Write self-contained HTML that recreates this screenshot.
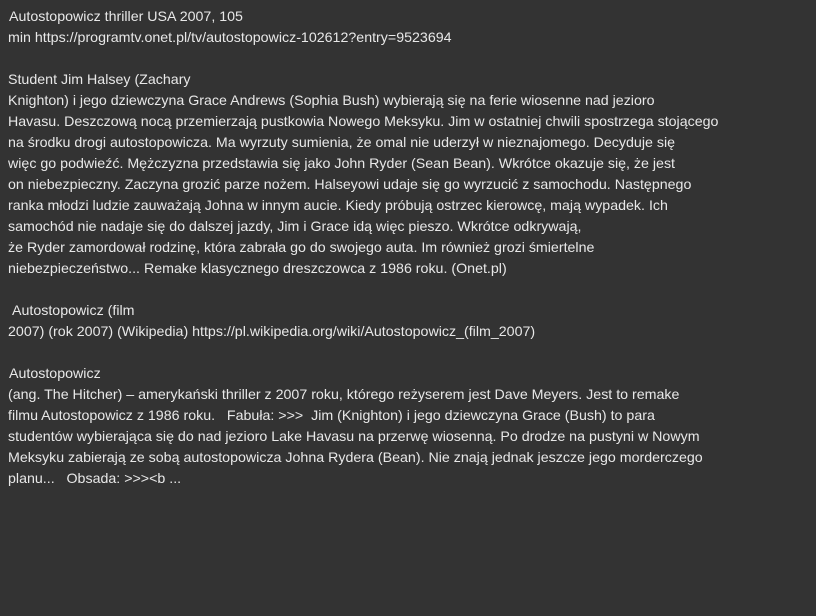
<!DOCTYPE html>
<html><head><meta charset="utf-8"><style>
html,body{margin:0;background:#333333;width:816px;height:616px;overflow:hidden}
body{color:#e8e8e8;font-family:"Liberation Sans",sans-serif;font-size:14.22px;line-height:21px;padding:7px 8px 0;white-space:pre;box-sizing:border-box}
.s{padding-left:1px}.s2{padding-left:4px}
</style></head><body><span class="s">Autostopowicz thriller USA 2007, 105</span>
min https://programtv.onet.pl/tv/autostopowicz-102612?entry=9523694

Student Jim Halsey (Zachary
Knighton) i jego dziewczyna Grace Andrews (Sophia Bush) wybierają się na ferie wiosenne nad jezioro
Havasu. Deszczową nocą przemierzają pustkowia Nowego Meksyku. Jim w ostatniej chwili spostrzega stojącego
na środku drogi autostopowicza. Ma wyrzuty sumienia, że omal nie uderzył w nieznajomego. Decyduje się
więc go podwieźć. Mężczyzna przedstawia się jako John Ryder (Sean Bean). Wkrótce okazuje się, że jest
on niebezpieczny. Zaczyna grozić parze nożem. Halseyowi udaje się go wyrzucić z samochodu. Następnego
ranka młodzi ludzie zauważają Johna w innym aucie. Kiedy próbują ostrzec kierowcę, mają wypadek. Ich
samochód nie nadaje się do dalszej jazdy, Jim i Grace idą więc pieszo. Wkrótce odkrywają,
że Ryder zamordował rodzinę, która zabrała go do swojego auta. Im również grozi śmiertelne
niebezpieczeństwo... Remake klasycznego dreszczowca z 1986 roku. (Onet.pl)

<span class="s2">Autostopowicz (film</span>
2007) (rok 2007) (Wikipedia) https://pl.wikipedia.org/wiki/Autostopowicz_(film_2007)

<span class="s">Autostopowicz</span>
(ang. The Hitcher) – amerykański thriller z 2007 roku, którego reżyserem jest Dave Meyers. Jest to remake
filmu Autostopowicz z 1986 roku.   Fabuła: &gt;&gt;&gt;  Jim (Knighton) i jego dziewczyna Grace (Bush) to para
studentów wybierająca się do nad jezioro Lake Havasu na przerwę wiosenną. Po drodze na pustyni w Nowym
Meksyku zabierają ze sobą autostopowicza Johna Rydera (Bean). Nie znają jednak jeszcze jego morderczego
planu...   Obsada: &gt;&gt;&gt;&lt;b ...</body></html>
